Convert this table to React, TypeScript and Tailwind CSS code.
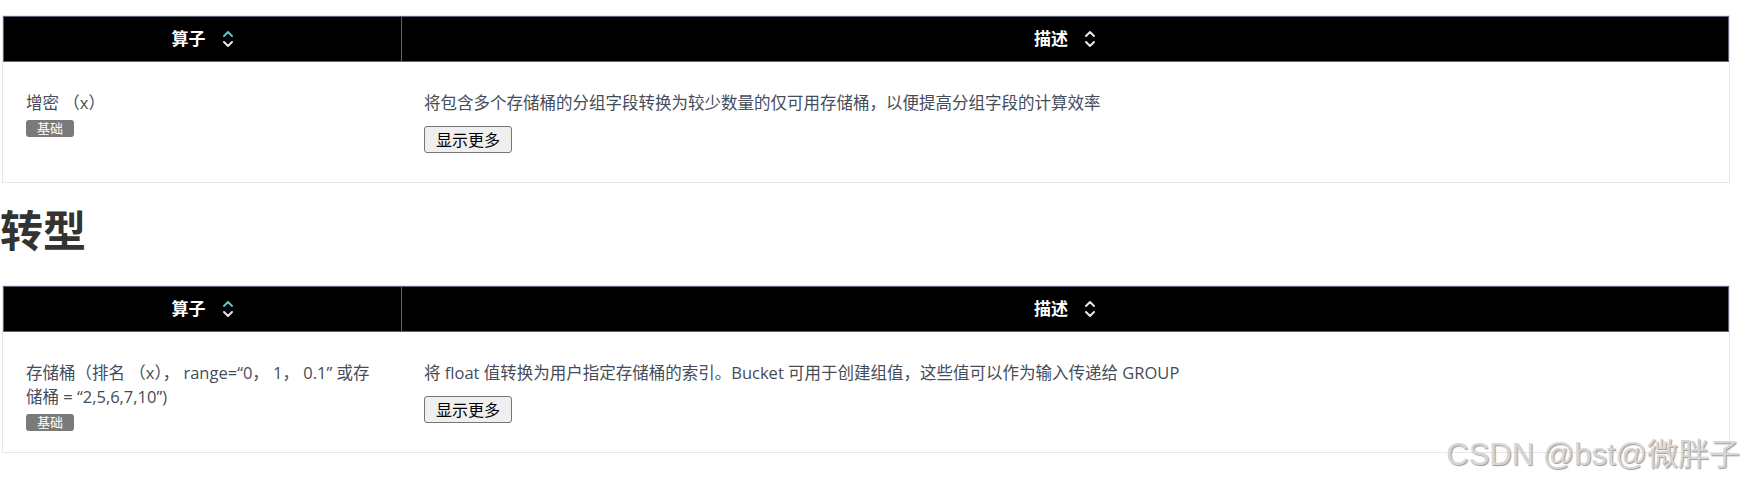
import React from 'react';

const font = { fontFamily: '"Open Sans", "Noto Sans CJK SC", sans-serif' };

const SortIcon: React.FC<{ active?: boolean }> = ({ active }) => (
  <svg width="12" height="20" viewBox="0 0 12 20" fill="none" strokeWidth="2" strokeLinecap="round" strokeLinejoin="round">
    <path d="M2 7 L6 3 L10 7" stroke={active ? '#5cc3c9' : '#e5e7eb'} />
    <path d="M2 13 L6 17 L10 13" stroke="#e5e7eb" />
  </svg>
);

type Row = { name: React.ReactNode; desc: string };

const OperatorTable: React.FC<{ row: Row }> = ({ row }) => (
  <div className="w-[1728px] ml-[2px] border border-[#e5e7eb]">
    <div className="flex h-[46px] bg-black border border-[#5b6573]">
      <div className="w-[398px] border-r border-[#5b6573] flex items-center justify-center gap-[16px]">
        <span className="text-white font-bold text-[17px]">算子</span>
        <SortIcon active />
      </div>
      <div className="flex-1 flex items-center justify-center gap-[16px]">
        <span className="text-white font-bold text-[17px]">描述</span>
        <SortIcon />
      </div>
    </div>
    <div className="flex h-[120px] text-[16.5px] leading-[24px] text-[#464c59]">
      <div className="w-[399px] pl-[23px] pr-[20px] pt-[29px]">
        <div>{row.name}</div>
        <span className="mt-[5px] flex w-fit items-center h-[17px] px-[11px] rounded-[3px] bg-[#7a7a7a] text-white text-[13px] leading-none">
          基础
        </span>
      </div>
      <div className="flex-1 pl-[22px] pt-[29px]">
        <div>{row.desc}</div>
        <button className="block mt-[11px] h-[27px] px-[11px] border border-[#767676] rounded-[3px] bg-[#efefef] text-black text-[16px] leading-none">
          显示更多
        </button>
      </div>
    </div>
  </div>
);

export default function App() {
  return (
    <div className="relative w-[1749px] h-[486px] bg-white overflow-hidden" style={font}>
      <div className="pt-[15px]">
        <OperatorTable
          row={{
            name: '增密 （x）',
            desc: '将包含多个存储桶的分组字段转换为较少数量的仅可用存储桶，以便提高分组字段的计算效率',
          }}
        />
        <h2 className="mt-[22px] mb-[28px] text-[43px] leading-[52px] font-bold text-[#333]">转型</h2>
        <OperatorTable
          row={{
            name: '存储桶（排名 （x）， range=“0， 1， 0.1” 或存储桶 = “2,5,6,7,10”)',
            desc: '将 float 值转换为用户指定存储桶的索引。Bucket 可用于创建组值，这些值可以作为输入传递给 GROUP',
          }}
        />
      </div>
      <div
        className="absolute right-[9px] top-[436px] text-[31px] leading-[38px] text-[#d6d6d6]"
        style={{ fontFamily: '"Liberation Sans", "Noto Sans CJK SC", sans-serif', textShadow: '1px 1px 1px #9a9a9a' }}
      >
        CSDN @bst@微胖子
      </div>
    </div>
  );
}
